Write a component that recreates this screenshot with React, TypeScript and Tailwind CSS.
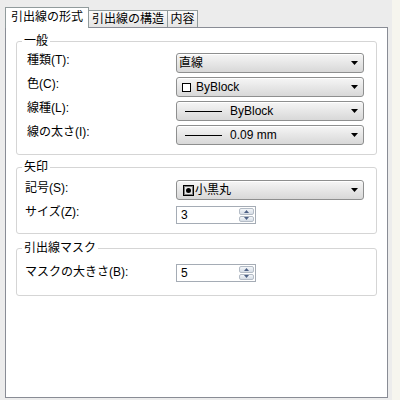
import type { ReactNode } from "react";

const FONT = "font-['Liberation_Sans','Noto_Sans_CJK_JP',sans-serif]";

function Arrow() {
  return (
    <svg width="7" height="4" viewBox="0 0 7 4" className="shrink-0">
      <path d="M0 0h7L3.5 4z" fill="#000" />
    </svg>
  );
}

function Combo({ children, tall }: { children: ReactNode; tall?: boolean }) {
  return (
    <div
      className={`flex w-[188px] items-center rounded-[3px] border border-[#8e8f8f] bg-linear-to-b from-[#f6f6f6] to-[#d8d8d8] pl-[2px] pr-[5px] shadow-[inset_0_1px_0_#ffffff] ${
        tall ? "h-[21px]" : "h-[20px]"
      }`}
    >
      <div className="flex flex-1 items-center">{children}</div>
      <Arrow />
    </div>
  );
}

function LineSample({ text }: { text: string }) {
  return (
    <>
      <span className="ml-[6px] h-px w-[37px] bg-black" />
      <span className="ml-[8px]">{text}</span>
    </>
  );
}

function Spin({ value }: { value: string }) {
  return (
    <div className="flex h-[18px] w-[80px] border border-[#a5acb5] bg-white">
      <div className="flex flex-1 items-center pl-[4px]">{value}</div>
      <div className="my-px mr-px flex w-[15px] flex-col gap-px">
        <div className="flex flex-1 items-center justify-center rounded-[2px] border border-[#b4bcc6] bg-linear-to-b from-[#f3f6f9] to-[#d6dde6]">
          <svg width="5" height="3" viewBox="0 0 5 3">
            <path d="M0 3h5L2.5 0z" fill="#4d6185" />
          </svg>
        </div>
        <div className="flex flex-1 items-center justify-center rounded-[2px] border border-[#b4bcc6] bg-linear-to-b from-[#f3f6f9] to-[#d6dde6]">
          <svg width="5" height="3" viewBox="0 0 5 3">
            <path d="M0 0h5L2.5 3z" fill="#4d6185" />
          </svg>
        </div>
      </div>
    </div>
  );
}

function Group({
  title,
  children,
  className,
}: {
  title: string;
  children: ReactNode;
  className: string;
}) {
  return (
    <fieldset className={`rounded-[3px] border border-[#d5d5d5] ${className}`}>
      <legend className="ml-[5px] px-[2px] leading-[14px]">{title}</legend>
      {children}
    </fieldset>
  );
}

export default function App() {
  return (
    <div className={`flex h-[400px] w-[400px] bg-[#ececec] text-[12px] leading-[14px] text-black ${FONT}`}>
      <div className="flex w-[392px] flex-col pb-[2px] pl-[5px] pt-[7px]">
        {/* Tabs */}
        <div className="flex h-[20px] items-end">
          <div className="relative z-10 -mb-px flex h-[21px] w-[84px] items-center justify-center border border-b-0 border-[#919b9c] bg-white pb-[2px]">
            引出線の形式
          </div>
          <div className="flex h-[17px] w-[79px] items-center justify-center border border-b-0 border-l-0 border-[#919b9c] bg-linear-to-b from-[#fbfbfb] to-[#e4e4e4]">
            引出線の構造
          </div>
          <div className="flex h-[17px] w-[30px] items-center justify-center border border-b-0 border-l-0 border-[#919b9c] bg-linear-to-b from-[#fbfbfb] to-[#e4e4e4]">
            内容
          </div>
        </div>

        {/* Page */}
        <div className="flex w-[383px] flex-1 flex-col border border-[#898c95] bg-white px-[10px] pt-[6px]">
          <Group title="一般" className="">
            <div className="flex flex-col gap-[4px] pb-[9px] pl-[10px] pt-[5px]">
              <div className="flex items-start">
                <span className="w-[149px]">種類(T):</span>
                <Combo>
                  <span>直線</span>
                </Combo>
              </div>
              <div className="flex items-start">
                <span className="w-[149px]">色(C):</span>
                <Combo>
                  <span className="ml-[3px] h-[9px] w-[9px] border border-black bg-white" />
                  <span className="ml-[5px]">ByBlock</span>
                </Combo>
              </div>
              <div className="flex items-start">
                <span className="w-[149px]">線種(L):</span>
                <Combo>
                  <LineSample text="ByBlock" />
                </Combo>
              </div>
              <div className="flex items-start">
                <span className="w-[149px]">線の太さ(I):</span>
                <Combo>
                  <LineSample text="0.09 mm" />
                </Combo>
              </div>
            </div>
          </Group>

          <Group title="矢印" className="mt-[5px]">
            <div className="flex flex-col gap-[6px] pb-[9px] pl-[8px] pt-[6px]">
              <div className="flex items-center">
                <span className="-mt-[4px] w-[151px]">記号(S):</span>
                <Combo>
                  <svg width="11" height="11" viewBox="0 0 11 11" className="ml-[4px]">
                    <rect x="0.5" y="0.5" width="10" height="10" fill="#fff" stroke="#000" />
                    <rect x="1.5" y="1.5" width="8" height="8" fill="#e8e8e8" stroke="#808080" />
                    <circle cx="5.5" cy="5.5" r="2.5" fill="#000" />
                  </svg>
                  <span className="ml-[1px]">小黒丸</span>
                </Combo>
              </div>
              <div className="flex items-center">
                <span className="-mt-[6px] w-[151px]">サイズ(Z):</span>
                <Spin value="3" />
              </div>
            </div>
          </Group>

          <Group title="引出線マスク" className="mt-[7px]">
            <div className="flex items-center pb-[13px] pl-[8px] pt-[9px]">
              <span className="-mt-[2px] w-[151px]">マスクの大きさ(B):</span>
              <Spin value="5" />
            </div>
          </Group>
        </div>
      </div>
      <div className="w-[8px] bg-[#f6f5ee]" />
    </div>
  );
}
